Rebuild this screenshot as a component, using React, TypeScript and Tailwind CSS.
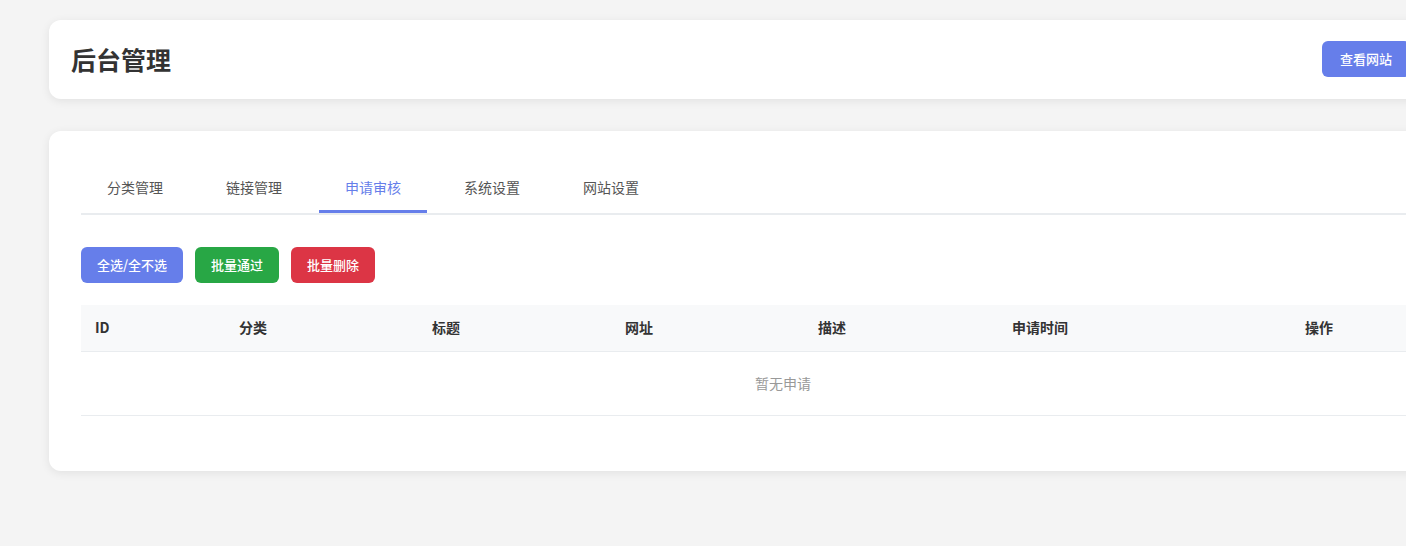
import React from "react";

const font = { fontFamily: '"Noto Sans CJK SC", "Noto Sans", sans-serif' };

const tabs = ["分类管理", "链接管理", "申请审核", "系统设置", "网站设置"];
const cols: [string, string][] = [
  ["ID", "w-[144px]"],
  ["分类", "w-[193px]"],
  ["标题", "w-[193px]"],
  ["网址", "w-[193px]"],
  ["描述", "w-[194px]"],
  ["申请时间", "w-[293px]"],
  ["操作", "w-[194px]"],
];

export default function App() {
  return (
    <div className="w-[1406px] h-[546px] overflow-hidden bg-[#f4f4f4]" style={font}>
      <div className="pl-[49px] pt-[20px]">
        <div className="w-[1383px] bg-white rounded-[12px] shadow-[0_2px_10px_rgba(0,0,0,0.08)] pl-[22px] pr-[22px] pt-[21px] pb-[22px] flex items-center justify-between">
          <h1 className="text-[25px] font-bold text-[#333] leading-none">后台管理</h1>
          <button className="h-[36px] px-[18px] rounded-[6px] bg-[#667eea] text-white text-[13px] font-medium">
            查看网站
          </button>
        </div>

        <div className="mt-[32px] w-[1468px] bg-white rounded-[12px] shadow-[0_2px_10px_rgba(0,0,0,0.08)] px-[32px] pt-[32px] pb-[55px]">
          <div className="flex gap-[11px] border-b-2 border-[#e9ecef]">
            {tabs.map((t, i) => (
              <div
                key={t}
                className={
                  i === 2
                    ? "w-[108px] text-center pt-[14px] pb-[13px] leading-5 text-[14px] border-b-[3px] border-[#667eea] text-[#667eea]"
                    : "w-[108px] text-center pt-[14px] pb-[13px] leading-5 text-[14px] border-b-[3px] border-transparent text-[#555]"
                }
              >
                {t}
              </div>
            ))}
          </div>

          <div className="mt-[32px] flex gap-[12px]">
            <button className="h-[36px] px-4 rounded-[6px] bg-[#667eea] text-white text-[13px] font-medium">
              全选/全不选
            </button>
            <button className="h-[36px] px-4 rounded-[6px] bg-[#28a745] text-white text-[13px] font-medium">
              批量通过
            </button>
            <button className="h-[36px] px-4 rounded-[6px] bg-[#dc3545] text-white text-[13px] font-medium">
              批量删除
            </button>
          </div>

          <table className="mt-[22px] w-[1404px] border-collapse table-fixed">
            <thead>
              <tr className="bg-[#f8f9fa] border-b border-[#e9ecef]">
                {cols.map(([c, w]) => (
                  <th
                    key={c}
                    className={`${w} h-[46px] px-[14px] text-left text-[14px] font-semibold text-[#333]`}
                  >
                    {c}
                  </th>
                ))}
              </tr>
            </thead>
            <tbody>
              <tr className="border-b border-[#e9ecef]">
                <td colSpan={7} className="h-[64px] text-center text-[14px] text-[#999]">
                  暂无申请
                </td>
              </tr>
            </tbody>
          </table>
        </div>
      </div>
    </div>
  );
}
